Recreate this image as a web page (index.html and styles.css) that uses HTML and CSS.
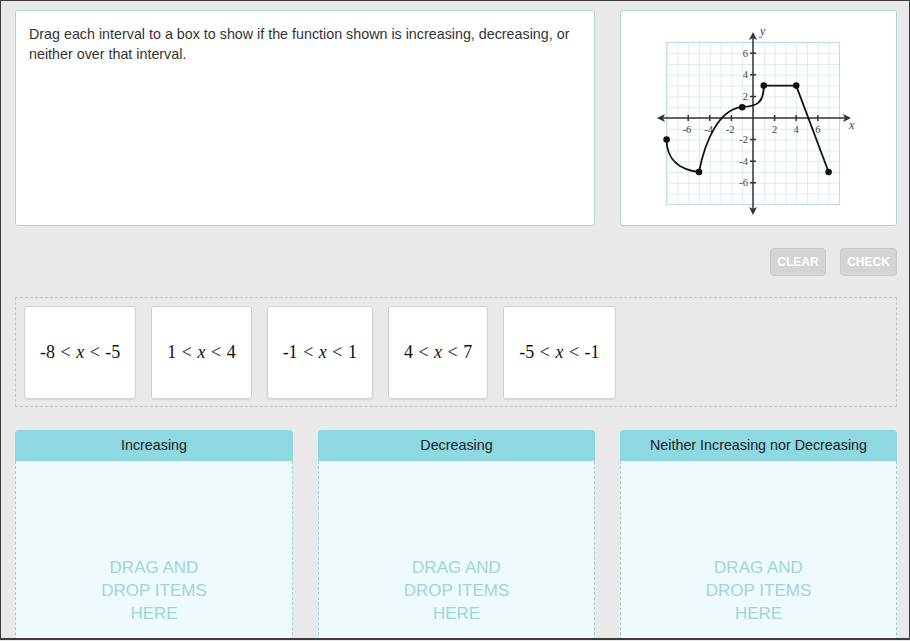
FILE: index.html
```html
<!DOCTYPE html>
<html>
<head>
<meta charset="utf-8">
<link rel="stylesheet" href="styles.css">
</head>
<body>
<div class="frame">
  <div class="top-row">
    <div class="card prompt">Drag each interval to a box to show if the function shown is increasing, decreasing, or neither over that interval.</div>
    <div class="card graph">
      <svg width="275" height="214" viewBox="0 0 275 214" xmlns="http://www.w3.org/2000/svg">
        <defs>
          <pattern id="grid" x="45.6" y="31.4" width="10.8" height="10.8" patternUnits="userSpaceOnUse">
            <path d="M0 0 H10.8 M0 0 V10.8" fill="none" stroke="#b3dde6" stroke-width="1"/>
          </pattern>
        </defs>
        <rect x="45.6" y="31.4" width="172.8" height="162" fill="url(#grid)" stroke="#b3dde6" stroke-width="1"/>
        <g stroke="#333" stroke-width="1.5" fill="none">
          <path d="M40 107 H226"/>
          <path d="M132 26 V200"/>
          <path d="M67.2 104 V110 M88.8 104 V110 M110.4 104 V110 M153.6 104 V110 M175.2 104 V110 M196.8 104 V110"/>
          <path d="M129 42.2 H135 M129 63.8 H135 M129 85.4 H135 M129 128.6 H135 M129 150.2 H135 M129 171.8 H135"/>
        </g>
        <g fill="#333">
          <polygon points="36,107 44,103 42,107 44,111"/>
          <polygon points="230,107 222,103 224,107 222,111"/>
          <polygon points="132,21 128,29 132,27 136,29"/>
          <polygon points="132,204 128,196 132,198 136,196"/>
        </g>
        <g font-family="'Liberation Serif', serif" font-size="10.5" fill="#444" text-anchor="middle">
          <text x="66" y="122">-6</text>
          <text x="87.6" y="122">-4</text>
          <text x="109.2" y="122">-2</text>
          <text x="153.6" y="122">2</text>
          <text x="175.2" y="122">4</text>
          <text x="196.8" y="122">6</text>
        </g>
        <g font-family="'Liberation Serif', serif" font-size="10.5" fill="#444" text-anchor="end">
          <text x="127" y="45.7">6</text>
          <text x="127" y="67.3">4</text>
          <text x="127" y="88.9">2</text>
          <text x="127" y="132.1">-2</text>
          <text x="127" y="153.7">-4</text>
          <text x="127" y="175.3">-6</text>
        </g>
        <g font-family="'Liberation Serif', serif" font-size="12" font-style="italic" fill="#444">
          <text x="228" y="118">x</text>
          <text x="139" y="24">y</text>
        </g>
        <path d="M45.6 128.6 C45.6 150 60 159 78 161 C84 130 98 98 121.2 96.2 C135 95 142.8 93 142.8 74.6 L175.2 74.6 L207.6 161" fill="none" stroke="#111" stroke-width="1.8"/>
        <g fill="#111">
          <circle cx="45.6" cy="128.6" r="3.3"/>
          <circle cx="78" cy="161" r="3.3"/>
          <circle cx="121.2" cy="96.2" r="3.3"/>
          <circle cx="142.8" cy="74.6" r="3.3"/>
          <circle cx="175.2" cy="74.6" r="3.3"/>
          <circle cx="207.6" cy="161" r="3.3"/>
        </g>
      </svg>
    </div>
  </div>
  <div class="buttons">
    <button class="btn clear">CLEAR</button>
    <button class="btn check">CHECK</button>
  </div>
  <div class="bank">
    <div class="item"><span>-8</span><span class="rel">&lt;</span><i>x</i><span class="rel">&lt;</span><span>-5</span></div>
    <div class="item"><span>1</span><span class="rel">&lt;</span><i>x</i><span class="rel">&lt;</span><span>4</span></div>
    <div class="item"><span>-1</span><span class="rel">&lt;</span><i>x</i><span class="rel">&lt;</span><span>1</span></div>
    <div class="item"><span>4</span><span class="rel">&lt;</span><i>x</i><span class="rel">&lt;</span><span>7</span></div>
    <div class="item"><span>-5</span><span class="rel">&lt;</span><i>x</i><span class="rel">&lt;</span><span>-1</span></div>
  </div>
  <div class="zones">
    <div class="zone">
      <div class="zone-head">Increasing</div>
      <div class="zone-body">DRAG AND<br>DROP ITEMS<br>HERE</div>
    </div>
    <div class="zone">
      <div class="zone-head">Decreasing</div>
      <div class="zone-body">DRAG AND<br>DROP ITEMS<br>HERE</div>
    </div>
    <div class="zone">
      <div class="zone-head">Neither Increasing nor Decreasing</div>
      <div class="zone-body">DRAG AND<br>DROP ITEMS<br>HERE</div>
    </div>
  </div>
</div>
</body>
</html>
```

FILE: styles.css
```css
html, body {
  margin: 0;
  padding: 0;
  background: #e9e9e9;
}
.frame {
  width: 910px;
  height: 640px;
  box-sizing: border-box;
  border: 1px solid #3c3c3c;
  border-bottom-width: 2px;
  padding: 9px 12px 0 14px;
  overflow: hidden;
  background: #e9e9e9;
  font-family: "Liberation Sans", Arial, sans-serif;
}
.top-row {
  display: grid;
  grid-template-columns: 1fr 277px;
  column-gap: 25px;
  height: 216px;
}
.card {
  background: #fff;
  border: 1px solid #a9d7dd;
  border-radius: 3px;
  box-sizing: border-box;
}
.prompt {
  padding: 13px 14px 0 13px;
  font-size: 14.3px;
  line-height: 20px;
  color: #333;
}
.graph svg {
  display: block;
}
.buttons {
  display: flex;
  justify-content: flex-end;
  gap: 14px;
  margin-top: 22px;
  height: 28px;
}
.btn {
  box-sizing: border-box;
  height: 28px;
  padding: 0;
  border: 1px solid #c9c9c9;
  border-radius: 4px;
  background: #d4d4d4;
  color: #fff;
  font-family: "Liberation Sans", Arial, sans-serif;
  font-weight: bold;
  font-size: 12px;
}
.clear { width: 56px; }
.check { width: 57px; }
.bank {
  margin-top: 21px;
  height: 110px;
  box-sizing: border-box;
  border: 1px dashed #c4c4c4;
  padding: 8px 8px;
  display: flex;
  gap: 15px;
}
.item {
  box-sizing: border-box;
  height: 93px;
  padding: 0 15px;
  background: #fff;
  border: 1px solid #d0d0d0;
  border-radius: 3px;
  box-shadow: 0 1px 1px rgba(0,0,0,0.08);
  display: flex;
  align-items: center;
  font-family: "Liberation Serif", "Times New Roman", serif;
  font-size: 18px;
  color: #111;
}
.item i {
  font-style: italic;
}
.rel {
  margin: 0 5.5px;
  color: #222;
}
.zones {
  margin-top: 23px;
  display: grid;
  grid-template-columns: 278px 277px 277px;
  column-gap: 25px;
}
.zone-head {
  height: 31px;
  background: #8ed8e2;
  border-radius: 4px 4px 0 0;
  text-align: center;
  font-size: 14.3px;
  line-height: 30px;
  color: #222;
}
.zone-body {
  height: 250px;
  box-sizing: border-box;
  background: #eefafc;
  border: 1px dashed #9fcfd6;
  border-top: none;
  padding-top: 95px;
  text-align: center;
  font-size: 17px;
  line-height: 23px;
  color: #9fd4df;
}
```
